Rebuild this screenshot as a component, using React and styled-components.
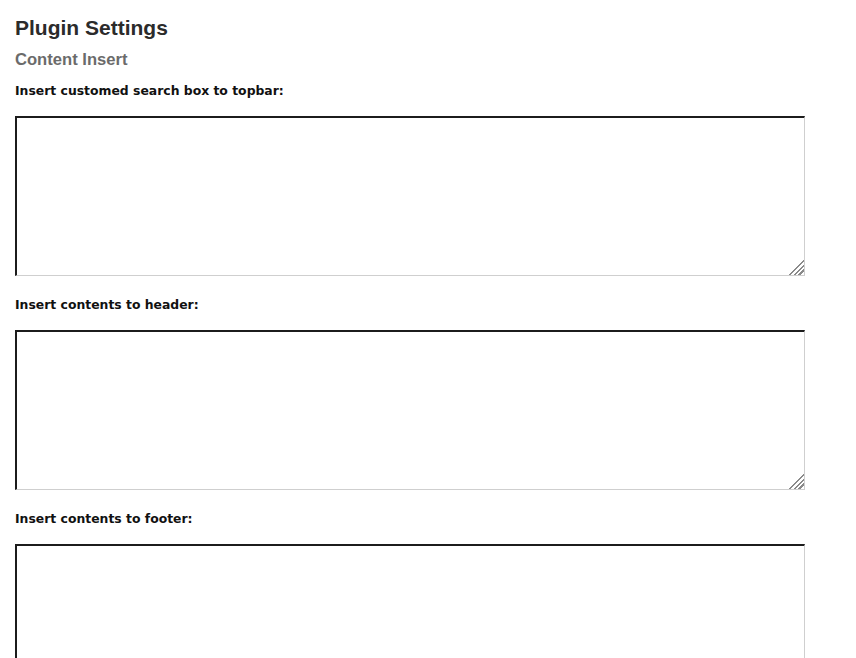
import React from 'react'
import styled, { createGlobalStyle } from 'styled-components'

const GlobalStyle = createGlobalStyle`
  html, body {
    margin: 0;
    padding: 0;
    background: #fff;
  }
`

const Page = styled.div`
  padding: 15px 15px 0 15px;
  font-family: 'Liberation Sans', Arial, sans-serif;
  color: #222;
`

const Title = styled.h2`
  margin: 0;
  font-size: 21px;
  font-weight: 700;
  line-height: 26px;
  color: #2b2b2b;
`

const Subtitle = styled.h3`
  margin: 8px 0 0 0;
  font-size: 16.6px;
  font-weight: 700;
  line-height: 22px;
  color: #6b6b6b;
`

const Field = styled.div`
  display: flex;
  flex-direction: column;
  margin-top: ${(p) => (p.first ? '12px' : '21px')};
`

const Label = styled.label`
  font-family: 'DejaVu Sans', Verdana, sans-serif;
  font-size: 12.4px;
  font-weight: 700;
  line-height: 16px;
  color: #111;
`

const Box = styled.textarea`
  box-sizing: border-box;
  margin-top: 17px;
  width: 790px;
  height: 160px;
  border-top: 2px solid #1c1c1c;
  border-left: 2px solid #1c1c1c;
  border-right: 1px solid #cfcfcf;
  border-bottom: 1px solid #cfcfcf;
  border-radius: 0;
  background: #fff;
  resize: both;
  outline: none;

  &::-webkit-resizer {
    background: linear-gradient(
      135deg,
      transparent 0 48%,
      #8a8a8a 48% 55%,
      transparent 55% 64%,
      #8a8a8a 64% 71%,
      transparent 71% 80%,
      #8a8a8a 80% 87%,
      transparent 87%
    );
  }
`

const fields = [
  'Insert customed search box to topbar:',
  'Insert contents to header:',
  'Insert contents to footer:',
]

export default function App() {
  return (
    <>
      <GlobalStyle />
      <Page>
        <Title>Plugin Settings</Title>
        <Subtitle>Content Insert</Subtitle>
        {fields.map((label, i) => (
          <Field key={label} first={i === 0}>
            <Label>{label}</Label>
            <Box />
          </Field>
        ))}
      </Page>
    </>
  )
}
